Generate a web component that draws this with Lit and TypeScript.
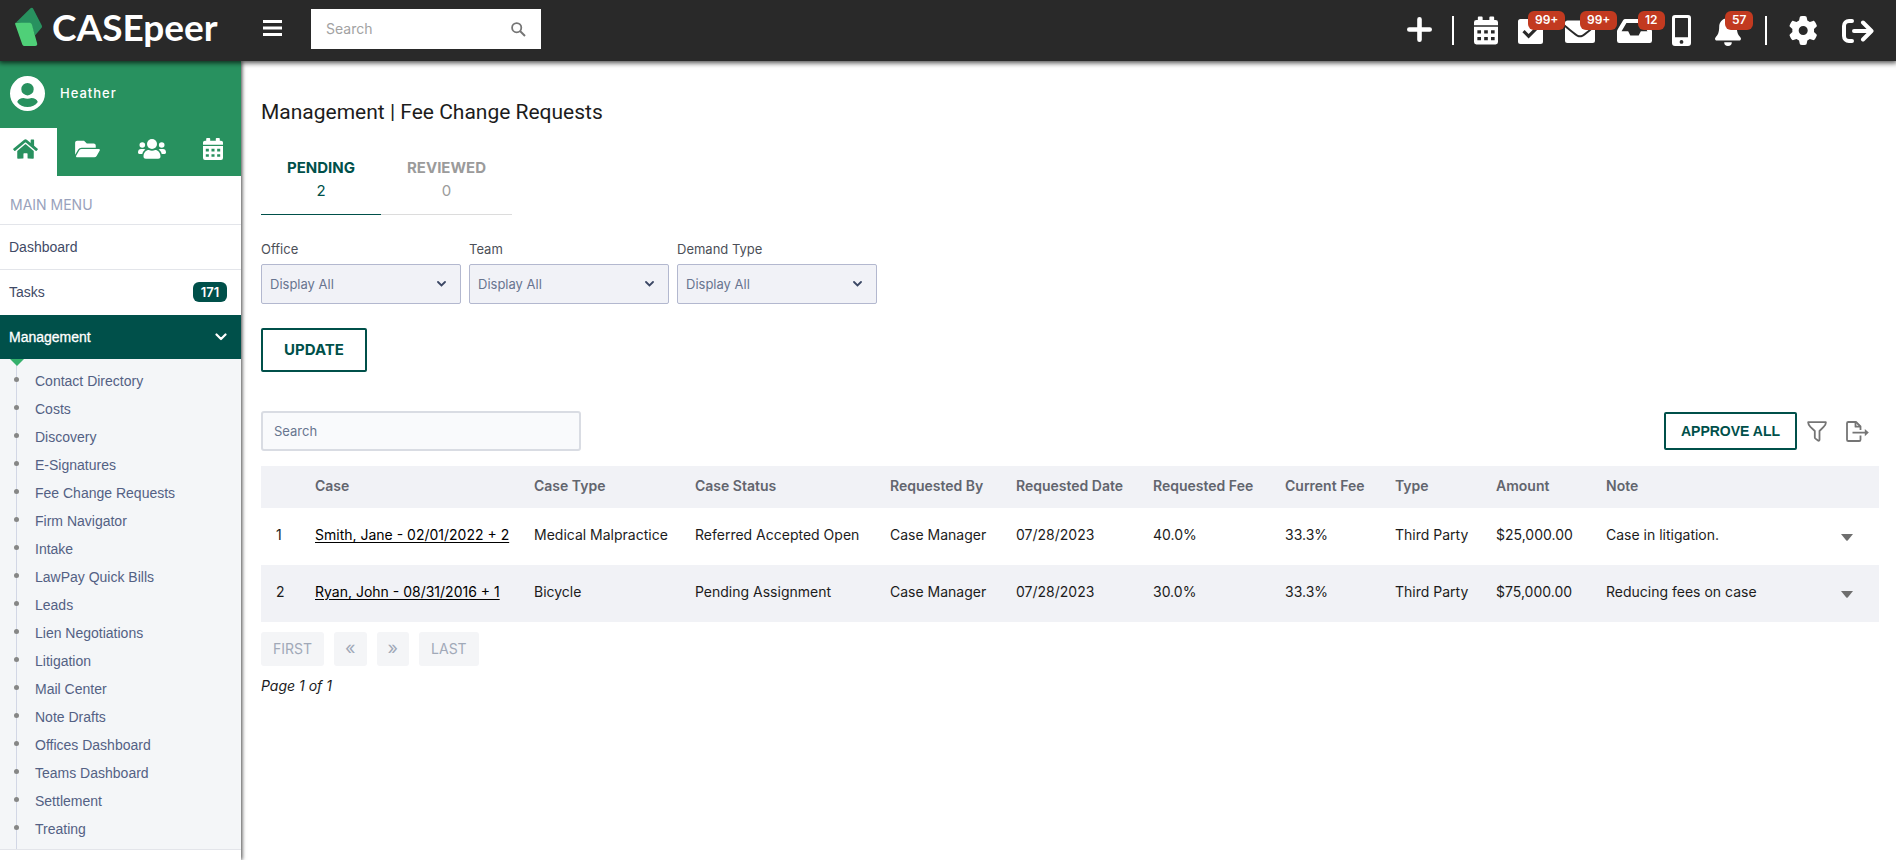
import { LitElement, html, css, svg } from "lit";
import { customElement, state } from "lit/decorators.js";
import { classMap } from "lit/directives/class-map.js";

const calendar = svg`
  <path d="M5 0h3a1 1 0 0 1 1 1v2.500h7V1a1 1 0 0 1 1-1h3a1 1 0 0 1 1 1v2.500h1.500A2.500 2.500 0 0 1 25 6v3H0V6a2.500 2.500 0 0 1 2.500-2.500H4V1a1 1 0 0 1 1-1z"/>
  <path fill-rule="evenodd" d="M0 10.500h25V26.500A2.500 2.500 0 0 1 22.500 29h-20A2.500 2.500 0 0 1 0 26.500zM3.500 14.300v3.400h3.800v-3.400zM10.600 14.300v3.400h3.800v-3.400zM17.700 14.300v3.400h3.800v-3.400zM3.500 21.300v3.400h3.800v-3.400zM10.600 21.300v3.400h3.800v-3.400zM17.700 21.300v3.400h3.800v-3.400z"/>`;

const homeIcon = html`<svg width="25" height="22" viewBox="0 0 576 512" aria-hidden="true"><path d="M280.37 148.26L96 300.11V464a16 16 0 0 0 16 16l112.06-.29a16 16 0 0 0 15.92-16V368a16 16 0 0 1 16-16h64a16 16 0 0 1 16 16v95.64a16 16 0 0 0 16 16.05L464 480a16 16 0 0 0 16-16V300L295.67 148.26a12.19 12.19 0 0 0-15.3 0zM571.6 251.47L488 182.56V44.05a12 12 0 0 0-12-12h-56a12 12 0 0 0-12 12v72.61L318.47 43a48 48 0 0 0-61 0L4.34 251.47a12 12 0 0 0-1.600 16.900l25.500 31A12 12 0 0 0 45.150 301l235.220-193.740a12.190 12.190 0 0 1 15.300 0L530.900 301a12 12 0 0 0 16.900-1.600l25.500-31a12 12 0 0 0-1.700-16.930z"/></svg>`;
const folderIcon = html`<svg width="25" height="22" viewBox="0 0 576 512" aria-hidden="true"><path d="M572.694 292.093L500.27 416.248A63.997 63.997 0 0 1 444.989 448H45.025c-18.523 0-30.064-20.093-20.731-36.093l72.424-124.155A64 64 0 0 1 152 256h399.964c18.523 0 30.064 20.093 20.73 36.093zM152 224h328v-48c0-26.51-21.49-48-48-48H272l-64-64H48C21.49 64 0 85.490 0 112v278.046l69.077-118.418C86.214 242.250 117.989 224 152 224z"/></svg>`;
const usersIcon = html`<svg width="28" height="20" viewBox="0 0 28 20" aria-hidden="true"><circle cx="14" cy="5" r="5"/><circle cx="4.300" cy="6" r="2.800"/><circle cx="23.700" cy="6" r="2.800"/><path d="M5.500 17.500c0-4 2.700-6.500 5.300-6.500 1.200.500 2 .700 3.200.700s2-.200 3.200-.700c2.600 0 5.300 2.500 5.300 6.500 0 1.500-1 2.200-2.300 2.200H7.800c-1.300 0-2.300-.700-2.300-2.200zM0 13.300C0 11.200 1.200 10 3 10h2.600c.7 0 1.300.200 1.800.500-1.800 1.200-2.800 2.700-3.100 4.500H1.400C.5 15 0 14.500 0 13.300zM28 13.300c0-2.100-1.200-3.300-3-3.300h-2.600c-.7 0-1.300.200-1.800.500 1.800 1.200 2.800 2.700 3.100 4.500h2.900c.9 0 1.400-.5 1.400-1.700z"/></svg>`;
const smallCalendar = html`<svg width="20" height="22" viewBox="0 0 25 29" preserveAspectRatio="none" aria-hidden="true">${calendar}</svg>`;

interface TopItem { label: string; icon: unknown; badge?: string; place?: string }

const topItems: TopItem[] = [
  { label: "Calendar", icon: html`<svg width="24" height="29" viewBox="0 0 25 29" aria-hidden="true">${calendar}</svg>` },
  { label: "Tasks", badge: "99+", place: "near", icon: html`<svg width="27" height="29" viewBox="0 0 27 29" aria-hidden="true"><path fill-rule="evenodd" d="M2.500 3h20A2.500 2.500 0 0 1 25 5.500v20a2.500 2.500 0 0 1-2.500 2.500h-20A2.500 2.500 0 0 1 0 25.500v-20A2.500 2.500 0 0 1 2.500 3zM10.600 22.400l10.200-10.200-2.200-2.200-8 8-4-4-2.200 2.200z"/></svg>` },
  { label: "Messages", badge: "99+", place: "middle", icon: html`<svg width="32" height="29" viewBox="0 0 32 29" aria-hidden="true"><path d="M2.500 4.500h25A2.500 2.500 0 0 1 30 7v1.700c-3.500 2.900-6.500 5.200-11.300 9-1.400 1.100-2.400 1.600-3.700 1.600s-2.300-.5-3.700-1.600C6.500 13.900 3.500 11.600 0 8.700V7a2.500 2.500 0 0 1 2.500-2.500z"/><path d="M0 11.300l9.600 7.700c2 1.600 3.500 2.300 5.400 2.300s3.400-.7 5.400-2.300l9.600-7.700v13.200a2.500 2.500 0 0 1-2.500 2.500h-25A2.500 2.500 0 0 1 0 24.500z"/></svg>` },
  { label: "Inbox", badge: "12", place: "far", icon: html`<svg width="35" height="29" viewBox="0 0 36 29" preserveAspectRatio="none" aria-hidden="true"><path fill-rule="evenodd" d="M8.500 3h19c1 0 1.700.4 2.200 1.200l5.700 9.300c.4.600.6 1.200.6 2v9.300a2.300 2.300 0 0 1-2.300 2.200H2.300A2.300 2.300 0 0 1 0 24.800v-9.300c0-.8.2-1.400.6-2l5.700-9.300C6.800 3.400 7.500 3 8.500 3zM9.700 7l-5 8.300h6.800l2.200 4.200h8.600l2.200-4.200h6.800L26.300 7z"/></svg>` },
  { label: "Phone", icon: html`<svg width="23" height="33" viewBox="0 0 23 33" aria-hidden="true"><path fill-rule="evenodd" d="M3 1h13a3 3 0 0 1 3 3v25a3 3 0 0 1-3 3H3a3 3 0 0 1-3-3V4a3 3 0 0 1 3-3zM3 4.500v18.800h13V4.500a.6.600 0 0 0-.6-.6H3.600a.6.600 0 0 0-.6.600zM9.500 26a1.900 1.900 0 1 0 0 3.800 1.900 1.900 0 1 0 0-3.800z"/></svg>` },
  { label: "Notifications", badge: "57", place: "near", icon: html`<svg width="30" height="33" viewBox="0 0 30 33" aria-hidden="true"><path d="M13 1.500c1 0 1.800.8 1.800 1.800v.9c4.300.9 7 4.300 7 8.600 0 6 1.500 8.300 3.500 10.400.6.700.8 1.200.6 2-.2.800-.8 1.300-1.700 1.300H1.800c-.9 0-1.500-.5-1.700-1.300-.2-.8 0-1.300.6-2 2-2.100 3.500-4.400 3.500-10.400 0-4.300 2.700-7.700 7-8.600v-.9c0-1 .8-1.800 1.800-1.800zM9.200 28.300h7.600a3.800 3.800 0 0 1-7.600 0z"/></svg>` },
];

const filters: [string, string][] = [["office", "Office"], ["team", "Team"], ["demand", "Demand Type"]];

const subItems = ["Contact Directory", "Costs", "Discovery", "E-Signatures", "Fee Change Requests", "Firm Navigator", "Intake", "LawPay Quick Bills", "Leads", "Lien Negotiations", "Litigation", "Mail Center", "Note Drafts", "Offices Dashboard", "Teams Dashboard", "Settlement", "Treating"];

const headings = ["Case", "Case Type", "Case Status", "Requested By", "Requested Date", "Requested Fee", "Current Fee", "Type", "Amount", "Note"];
const rows = [
  ["Smith, Jane - 02/01/2022 + 2", "Medical Malpractice", "Referred Accepted Open", "Case Manager", "07/28/2023", "40.0%", "33.3%", "Third Party", "$25,000.00", "Case in litigation."],
  ["Ryan, John - 08/31/2016 + 1", "Bicycle", "Pending Assignment", "Case Manager", "07/28/2023", "30.0%", "33.3%", "Third Party", "$75,000.00", "Reducing fees on case"],
];

const resets = css`
  :host { display: block; font-family: Inter, sans-serif; font-size: 14px; }
  * { box-sizing: border-box; }
  button { font: inherit; color: inherit; background: none; border: 0; padding: 0; cursor: pointer; }
  input, select { font: inherit; border-radius: 0; }
  a { color: inherit; text-decoration: none; }
  svg { display: block; fill: currentColor; flex: none; }
  ul { list-style: none; margin: 0; padding: 0; }
`;

@customElement("top-bar")
class TopBar extends LitElement {
  static styles = [resets, css`
    .bar { display: flex; align-items: center; height: 61px; padding-right: 22px; background: #292929; color: #fff; box-shadow: 0 1px 5px 1px rgba(0, 0, 0, 0.7); }
    .brand { display: flex; align-items: center; gap: 10px; width: 241px; padding: 0 0 8px 15px; font: 700 37px/46px Lato, sans-serif; }
    .burger { margin: 0 29px 0 22px; padding-bottom: 5px; }
    .search { display: flex; align-items: center; width: 230px; height: 40px; margin-bottom: 3px; padding: 0 15px; background: #fff; color: #757575; }
    .search input { flex: 1; min-width: 0; border: 0; padding: 0 0 1px; outline: 0; background: none; }
    .search input::placeholder { color: #a2a2a2; }
    .tools { display: flex; align-items: center; gap: 20px; margin-left: auto; }
    .tool { position: relative; display: flex; align-items: center; height: 61px; }
    .rule { width: 2px; height: 29px; background: #fff; }
    .badge { position: absolute; top: 11px; height: 19px; padding: 0 7px; border-radius: 6px; background: #c23a20; color: #fff; font-size: 12px; font-weight: 600; line-height: 18px; }
    .near { left: 10px; }
    .middle { left: 15px; }
    .far { left: 21px; }
  `];
  render() {
    return html`
      <header class="bar">
        <a class="brand" href="#" aria-label="CASEpeer">
          <svg width="27" height="40" viewBox="0 0 27 40" aria-hidden="true">
            <path fill="#28915f" d="M1 15.500L15.500 1.200c1-.9 2.300-.6 2.700.5L26.800 18.500c.4 1 .2 1.800-.4 2.600L20 28.500l-4-11.500z"/>
            <path fill="#4fd078" d="M1.200 15.800h13c1.300 0 2.200.6 2.700 1.800l5.200 18.600c.5 1.800-.3 2.800-2 2.800H9.700c-1.300 0-2.100-.6-2.500-1.800L.2 17.200c-.2-.9.200-1.400 1-1.400z"/>
          </svg>
          <span>CASEpeer</span>
        </a>
        <button class="burger" aria-label="Toggle menu"><svg width="19" height="16" viewBox="0 0 19 16"><path d="M0 0h19v3H0zM0 6.500h19v3H0zM0 13h19v3H0z"/></svg></button>
        <label class="search">
          <input type="text" placeholder="Search" aria-label="Search cases" />
          <svg width="15" height="15" viewBox="0 0 15 15" aria-hidden="true"><g fill="none" stroke="currentColor"><circle cx="5.700" cy="5.700" r="4.600" stroke-width="1.800"/><path d="M9 9l5 5" stroke-width="2"/></g></svg>
        </label>
        <div class="tools">
          <button class="tool" aria-label="Add"><svg width="25" height="27" viewBox="0 0 25 27"><path d="M12.500 2.300v20.400M2.300 12.500h20.400" stroke="currentColor" stroke-width="4.600" stroke-linecap="round"/></svg></button>
          <span class="rule"></span>
          ${topItems.map((t) => html`<button class="tool" aria-label=${t.label}>${t.icon}${t.badge ? html`<span class="badge ${t.place}">${t.badge}</span>` : ""}</button>`)}
          <span class="rule"></span>
          <button class="tool" aria-label="Settings"><svg width="35" height="29" viewBox="-30 0 618 512"><path d="M495.9 166.6c3.2 8.7 .5 18.4-6.4 24.6l-43.3 39.4c1.1 8.3 1.7 16.8 1.7 25.4s-.6 17.1-1.7 25.4l43.3 39.4c6.9 6.2 9.6 15.9 6.4 24.6c-4.4 11.9-9.7 23.3-15.8 34.3l-4.7 8.1c-6.6 11-14 21.4-22.1 31.2c-5.9 7.2-15.7 9.6-24.5 6.8l-55.7-17.7c-13.4 10.3-28.2 18.9-44 25.4l-12.5 57.1c-2 9.1-9 16.3-18.2 17.8c-13.8 2.3-28 3.5-42.5 3.5s-28.7-1.2-42.5-3.5c-9.2-1.5-16.2-8.7-18.2-17.8l-12.5-57.1c-15.8-6.5-30.6-15.1-44-25.4L83.1 425.9c-8.8 2.8-18.6 .3-24.5-6.800c-8.100-9.800-15.500-20.200-22.100-31.200l-4.700-8.100c-6.100-11-11.400-22.400-15.800-34.300c-3.200-8.700-.5-18.400 6.400-24.600l43.300-39.400C64.600 273.100 64 264.600 64 256s.6-17.100 1.700-25.400L22.400 191.200c-6.900-6.200-9.600-15.900-6.400-24.600c4.400-11.900 9.700-23.300 15.800-34.300l4.700-8.100c6.600-11 14-21.400 22.100-31.200c5.900-7.200 15.700-9.600 24.500-6.800l55.700 17.700c13.400-10.300 28.200-18.900 44-25.400l12.500-57.100c2-9.100 9-16.300 18.200-17.800C227.300 1.200 241.500 0 256 0s28.700 1.200 42.500 3.500c9.200 1.500 16.200 8.700 18.200 17.800l12.500 57.100c15.800 6.500 30.600 15.100 44 25.400l55.700-17.700c8.800-2.800 18.600-.3 24.500 6.800c8.100 9.800 15.500 20.200 22.100 31.200l4.700 8.100c6.100 11 11.400 22.400 15.800 34.300zM256 336a80 80 0 1 0 0-160 80 80 0 1 0 0 160z"/></svg></button>
          <button class="tool" aria-label="Log out"><svg width="32" height="24" viewBox="0 0 32 24"><g fill="none" stroke="currentColor" stroke-width="4" stroke-linecap="round" stroke-linejoin="round"><path d="M10 2H7a5 5 0 0 0-5 5v10a5 5 0 0 0 5 5h3"/><path d="M12 12h17M21 3.500l8.500 8.500-8.500 8.500"/></g></svg></button>
        </div>
      </header>`;
  }
}

@customElement("side-nav")
class SideNav extends LitElement {
  static styles = [resets, css`
    .side { height: 100%; background: #fff; box-shadow: 1px 0 4px rgba(0, 0, 0, 0.75); }
    .user { display: flex; align-items: center; gap: 15px; height: 67px; padding: 0 10px 3px; background: #28915f; color: #fff; letter-spacing: 1px; font-size: 13px; font-weight: 500; }
    .quick { display: grid; grid-template-columns: 57px 61px 67px 56px; background: #28915f; color: #fff; }
    .quick button { display: flex; align-items: center; justify-content: center; height: 48px; padding-bottom: 6px; }
    .quick .on { justify-content: flex-start; padding-left: 13px; background: #fff; color: #28915f; }
    .heading { margin: 0; padding: 18px 10px 9px; border-bottom: 1px solid #e3e5ea; color: #99a2bc; font-size: 14px; font-weight: 400; line-height: 21px; }
    .menu { font-family: "Liberation Sans", sans-serif; }
    .row { display: flex; align-items: center; justify-content: space-between; height: 45px; padding: 0 14px 0 9px; border-bottom: 1px solid transparent; color: #3f4a66; }
    .row.line { border-bottom-color: #e3e5ea; }
    .row.open { height: 44px; background: #00504a; color: #fff; -webkit-text-stroke: 0.3px #fff; }
    .count { height: 20px; padding: 0 6px; border-radius: 6px; background: #00504a; color: #fff; font: 600 13px/20px Inter, sans-serif; min-width: 34px; text-align: center; }
    .sub { position: relative; padding: 8px 0 6px; background: linear-gradient(#d2d7e5, #d2d7e5) 16px 0 / 1px 100% no-repeat #f4f6f8; border-bottom: 1px solid #e3e5ea; color: #536184; }
    .sub::before { content: ""; position: absolute; top: 0; left: 10px; border: solid transparent; border-width: 7px 7px 0; border-top-color: #35b06c; }
    .sub a { display: flex; align-items: center; gap: 16px; height: 28px; padding-left: 14px; }
    .sub a::before { content: ""; width: 5px; height: 5px; margin-bottom: 3px; border-radius: 50%; background: #868786; }
  `];
  render() {
    return html`
      <aside class="side">
        <div class="user">
          <svg width="35" height="35" viewBox="0 0 35 35" aria-hidden="true"><path fill-rule="evenodd" d="M17.500 0a17.500 17.500 0 1 1 0 35 17.500 17.500 0 1 1 0-35zM17.500 7a6.200 6.200 0 1 0 0 12.400 6.200 6.200 0 1 0 0-12.400zM7.200 26c2.300 3.200 6 5 10.300 5s8-1.800 10.300-5c-.8-2.600-3.500-4-6.300-4-1.400.500-2.600.700-4 .700s-2.600-.2-4-.7c-2.800 0-5.500 1.400-6.300 4z"/></svg>
          <span>Heather</span>
        </div>
        <div class="quick">
          <button class="on" aria-label="Home">${homeIcon}</button>
          <button aria-label="Files">${folderIcon}</button>
          <button aria-label="Contacts">${usersIcon}</button>
          <button aria-label="Calendar">${smallCalendar}</button>
        </div>
        <h2 class="heading">MAIN MENU</h2>
        <nav class="menu">
          <a class="row line" href="#">Dashboard</a>
          <a class="row" href="#">Tasks <span class="count">171</span></a>
          <a class="row open" href="#">Management
            <svg width="12" height="8" viewBox="0 0 12 8" aria-hidden="true"><path d="M1.500 1.500L6 6l4.500-4.500" fill="none" stroke="currentColor" stroke-width="2.200" stroke-linecap="round" stroke-linejoin="round"/></svg>
          </a>
          <ul class="sub">${subItems.map((s) => html`<li><a href="#">${s}</a></li>`)}</ul>
        </nav>
      </aside>`;
  }
}

@customElement("fee-requests")
class FeeRequests extends LitElement {
  @state() private tab = 0;
  static styles = [resets, css`
    .page { padding: 38px 17px 24px 20px; color: #1c1c1c; }
    h1 { margin: 0 0 31px; font: 400 21px/26px Roboto, sans-serif; }
    .tabs { display: flex; margin-bottom: 25px; }
    .tab { display: grid; justify-items: center; padding: 0 26px 12px; border-bottom: 1px solid #dcdcdc; color: #9b9b9b; font-size: 15px; line-height: 23px; }
    .tab strong { font-weight: 700; }
    .tab.on { border-color: #00504a; color: #00504a; }
    .filters { display: flex; gap: 8px; margin-bottom: 24px; }
    .field { display: grid; gap: 6px; width: 200px; color: #4c4f58; font-size: 13px; line-height: 18px; }
    .pick { display: grid; align-items: center; }
    .pick > * { grid-area: 1 / 1; }
    .pick svg { justify-self: end; margin-right: 15px; color: #3b4764; pointer-events: none; }
    select { width: 100%; height: 40px; padding: 0 8px; appearance: none; border: 1px solid #b3b8cf; border-radius: 2px; background: #f1f2f7; color: #68758f; }
    .outline { display: inline-flex; align-items: center; justify-content: center; border: 2px solid #00504a; border-radius: 2px; background: #fff; color: #00504a; font-weight: 700; }
    .update { height: 44px; padding: 0 21px 2px; font-size: 15px; }
    .toolbar { display: flex; align-items: center; margin: 39px 0 15px; padding-right: 10px; color: #757575; }
    .find { width: 320px; height: 40px; margin-right: auto; padding: 0 11px 1px; border: 2px solid #d9dce3; border-radius: 3px; background: #f9fafc; font-size: 13px; }
    .find::placeholder { color: #68758f; }
    .approve { height: 38px; margin-right: 10px; padding: 0 15px; font-family: "Liberation Sans", sans-serif; }
    .export { margin-left: 19px; }
    table { width: 100%; border-collapse: collapse; table-layout: fixed; }
    th { height: 42px; padding: 0 0 3px 15px; background: #f1f2f6; color: #62656e; font-weight: 600; text-align: left; }
    td { height: 57px; padding: 0 0 4px 15px; white-space: nowrap; }
    tbody tr:nth-child(even) { background: #f1f2f6; }
    td a { color: #000; text-decoration: underline; text-underline-offset: 2px; }
    .num { width: 39px; }
    .case { width: 219px; }
    .kind { width: 161px; }
    .status { width: 195px; }
    .by { width: 126px; }
    .date { width: 137px; }
    .fee { width: 132px; }
    .mid { width: 110px; }
    .type { width: 101px; }
    .more { width: 65px; }
    .caret { display: block; padding: 6px 12px 0; color: #6e6e6e; }
    .pager { display: flex; gap: 10px; margin: 10px 0; }
    .pager button { height: 34px; padding: 0 12px 2px; border-radius: 3px; background: #f4f5f7; color: #a1a9b8; }
    .pager .step { padding: 0 11px 4px; font-size: 18px; }
    .info { margin: 0; font-style: italic; line-height: 20px; }
  `];
  render() {
    const tabs: [string, number][] = [["PENDING", 2], ["REVIEWED", 0]];
    return html`
      <main class="page">
        <h1>Management | Fee Change Requests</h1>
        <div class="tabs" role="tablist">
          ${tabs.map(([name, n], i) => html`<button role="tab" aria-selected=${this.tab === i ? "true" : "false"} class=${classMap({ tab: true, on: this.tab === i })} @click=${() => (this.tab = i)}><strong>${name}</strong><span>${n}</span></button>`)}
        </div>
        <div class="filters">
          ${filters.map(([id, label]) => html`
            <div class="field">
              <label for=${id}>${label}</label>
              <div class="pick">
                <select id=${id}><option>Display All</option></select>
                <svg width="9" height="6" viewBox="0 0 9 6" aria-hidden="true"><path d="M1 1l3.500 3.500L8 1" fill="none" stroke="currentColor" stroke-width="1.800" stroke-linecap="round"/></svg>
              </div>
            </div>`)}
        </div>
        <button class="outline update">UPDATE</button>
        <div class="toolbar">
          <input class="find" type="text" placeholder="Search" aria-label="Search requests" />
          <button class="outline approve">APPROVE ALL</button>
          <button aria-label="Filter"><svg width="20" height="21" viewBox="0 0 20 21"><path d="M1.200 1.200h17.600c.3 2-.8 3.300-2.200 4.700L12.500 10v8.800c0 1-.8 1.200-1.500.7l-2.500-1.900c-.5-.4-.7-.8-.7-1.400V10L3.400 5.900C2 4.500 1 3.200 1.200 1.200z" fill="none" stroke="currentColor" stroke-width="1.800" stroke-linejoin="round"/></svg></button>
          <button class="export" aria-label="Export"><svg width="23" height="21" viewBox="0 0 23 21"><g fill="none" stroke="currentColor" stroke-width="1.800" stroke-linejoin="round"><path d="M14.500 9V5.500L10 1H2.300C1.500 1 1 1.500 1 2.300v16.400c0 .8.500 1.300 1.300 1.300h10.900c.8 0 1.300-.5 1.300-1.300V14.500"/><path d="M9.500 1v4.700h5M6.500 11.600H20"/></g><path d="M18.800 8l4 3.600-4 3.600z"/></svg></button>
        </div>
        <table>
          <colgroup><col class="num" /><col class="case" /><col class="kind" /><col class="status" /><col class="by" /><col class="date" /><col class="fee" /><col class="mid" /><col class="type" /><col class="mid" /><col /><col class="more" /></colgroup>
          <thead><tr><th></th>${headings.map((h) => html`<th scope="col">${h}</th>`)}<th></th></tr></thead>
          <tbody>
            ${rows.map((r, i) => html`<tr>
              <td>${i + 1}</td>
              ${r.map((c, j) => html`<td>${j === 0 ? html`<a href="#">${c}</a>` : c}</td>`)}
              <td><button class="caret" aria-label="Row actions"><svg width="12" height="7" viewBox="0 0 12 7"><path d="M0 0h12L6.700 6.500q-.7.700-1.400 0z"/></svg></button></td>
            </tr>`)}
          </tbody>
        </table>
        <nav class="pager" aria-label="Pages">
          <button>FIRST</button><button class="step" aria-label="Previous page">«</button><button class="step" aria-label="Next page">»</button><button>LAST</button>
        </nav>
        <p class="info">Page 1 of 1</p>
      </main>`;
  }
}

@customElement("app-root")
class AppRoot extends LitElement {
  static styles = css`
    :host { display: grid; grid-template: auto 1fr / 241px minmax(0, 1fr); min-height: 100vh; background: #fff; }
    top-bar { grid-column: 1 / -1; z-index: 2; }
    side-nav { z-index: 1; }
  `;
  render() {
    return html`<top-bar></top-bar><side-nav></side-nav><fee-requests></fee-requests>`;
  }
}
